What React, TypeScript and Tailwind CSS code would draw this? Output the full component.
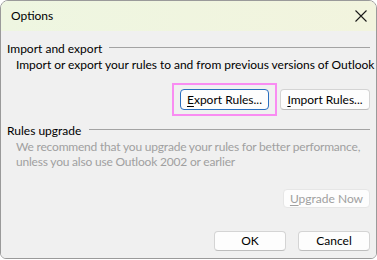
import React from "react";

const font = { fontFamily: 'Lato, "Noto Sans", sans-serif' };

function Btn({ children, className = "" }: { children: React.ReactNode; className?: string }) {
  return (
    <div
      className={
        "flex items-center justify-center rounded-[4px] border bg-[#fdfdfd] text-[12px] leading-none " +
        className
      }
    >
      {children}
    </div>
  );
}

export default function App() {
  return (
    <div className="w-[377px] h-[260px] bg-white" style={font}>
      <div className="w-[377px] h-[259px] flex flex-col rounded-t-[8px] rounded-b-[6px] border border-[#9a9a9a] overflow-hidden text-black">
        <div className="h-[30px] flex items-center justify-between pl-[10px] pr-[7px] bg-gradient-to-r from-[#eef6e1] to-[#f2f4de]">
          <span className="text-[12px] leading-none">Options</span>
          <svg width="14" height="14" viewBox="0 0 14 14" className="mr-[1px]">
            <path d="M1.5 1.5 L12.5 12.5 M12.5 1.5 L1.5 12.5" stroke="#1a1a1a" strokeWidth="1.1" fill="none" />
          </svg>
        </div>
        <div className="flex-1 bg-[#f0f0f0] flex flex-col pt-[10px] pl-[6px] pr-[6px] text-[12px]">
          <div className="flex items-center h-[16px]">
            <span className="leading-none">Import and export</span>
            <div className="flex-1 h-px bg-[#a3a3a3] ml-[7px] mb-[3px]" />
          </div>
          <div className="h-[16px] flex items-center pl-[9px] leading-none whitespace-nowrap tracking-[-0.03px]">
            Import or export your rules to and from previous versions of Outlook
          </div>
          <div className="flex justify-end gap-[11px] mt-[16px]">
            <div className="relative">
              <Btn className="w-[89px] h-[21px] border-[#2a6fc0]">
                <span>
                  <span className="underline underline-offset-2">E</span>xport Rules...
                </span>
              </Btn>
              <div className="absolute -left-[8px] -right-[8px] -top-[6px] -bottom-[6px] border-2 border-[#f98cf2] pointer-events-none" />
            </div>
            <Btn className="w-[90px] h-[21px] border-[#d4d4d4] border-b-[#bdbdbd]">
              <span>
                <span className="underline underline-offset-2">I</span>mport Rules...
              </span>
            </Btn>
          </div>
          <div className="flex items-center h-[16px] mt-[13px]">
            <span className="leading-none">Rules upgrade</span>
            <div className="flex-1 h-px bg-[#a3a3a3] ml-[8px] mb-[3px]" />
          </div>
          <div className="pl-[9px] text-[#a0a0a0] leading-[15px] whitespace-nowrap tracking-[-0.2px]">
            We recommend that you upgrade your rules for better performance,
            <br />
            unless you also use Outlook 2002 or earlier
          </div>
          <div className="flex justify-end mt-[20px]">
            <Btn className="w-[87px] h-[19px] border-[#e6e6e6] bg-[#f5f5f5] text-[#a0a0a0]">
              <span>
                <span className="underline underline-offset-2">U</span>pgrade Now
              </span>
            </Btn>
          </div>
          <div className="flex justify-end gap-[12px] mt-[23px]">
            <Btn className="w-[72px] h-[20px] border-[#d4d4d4] border-b-[#bdbdbd]">OK</Btn>
            <Btn className="w-[72px] h-[20px] border-[#d4d4d4] border-b-[#bdbdbd]">Cancel</Btn>
          </div>
        </div>
      </div>
    </div>
  );
}
